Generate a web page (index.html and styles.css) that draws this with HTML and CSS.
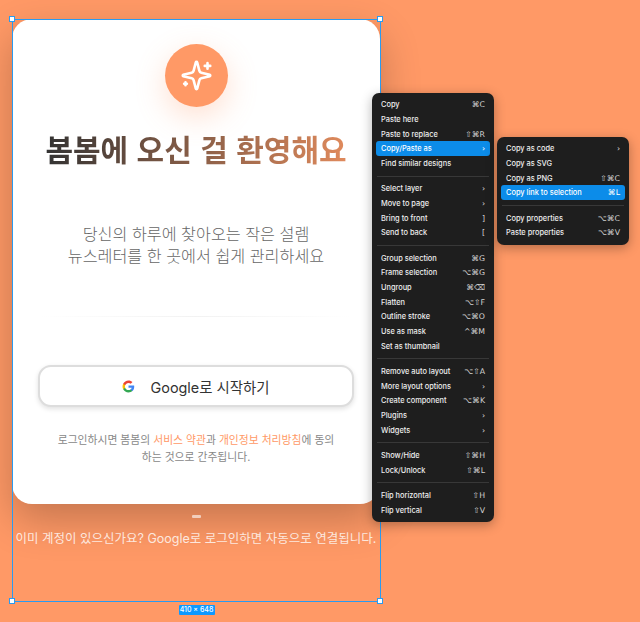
FILE: index.html
```html
<!DOCTYPE html>
<html lang="ko">
<head>
<meta charset="utf-8">
<title>봄봄</title>
<link rel="stylesheet" href="styles.css">
</head>
<body>
<div class="frame">
  <main class="card">
    <div class="badge">
      <svg class="sparkle" viewBox="0 0 24 24" fill="none" stroke="#fff" stroke-width="1.9" stroke-linecap="round" stroke-linejoin="round">
        <path d="M9.937 15.5A2 2 0 0 0 8.5 14.063l-6.135-1.582a.5.5 0 0 1 0-.962L8.5 9.936A2 2 0 0 0 9.937 8.5l1.582-6.135a.5.5 0 0 1 .963 0L14.063 8.5A2 2 0 0 0 15.5 9.937l6.135 1.581a.5.5 0 0 1 0 .964L15.5 14.063a2 2 0 0 0-1.437 1.437l-1.582 6.135a.5.5 0 0 1-.963 0z"/>
        <path d="M20 3v4M22 5h-4M4 17v2M5 18H3"/>
      </svg>
    </div>
    <h1 class="title">봄봄에 오신 걸 환영해요</h1>
    <p class="lead">당신의 하루에 찾아오는 작은 설렘<br>뉴스레터를 한 곳에서 쉽게 관리하세요</p>
    <div class="rule"></div>
    <button class="google" type="button">
      <svg class="g-icon" viewBox="0 0 24 24">
        <path fill="#4285F4" d="M22.56 12.25c0-.78-.07-1.53-.2-2.25H12v4.26h5.92c-.26 1.37-1.04 2.53-2.21 3.31v2.77h3.57c2.08-1.92 3.28-4.74 3.28-8.09z"/>
        <path fill="#34A853" d="M12 23c2.97 0 5.46-.98 7.28-2.66l-3.57-2.77c-.98.66-2.23 1.06-3.71 1.06-2.86 0-5.29-1.93-6.16-4.53H2.18v2.84C3.99 20.53 7.7 23 12 23z"/>
        <path fill="#FBBC05" d="M5.84 14.09c-.22-.66-.35-1.36-.35-2.09s.13-1.43.35-2.09V7.07H2.18C1.43 8.55 1 10.22 1 12s.43 3.45 1.18 4.93l3.66-2.84z"/>
        <path fill="#EA4335" d="M12 5.38c1.62 0 3.06.56 4.21 1.64l3.15-3.15C17.45 2.09 14.97 1 12 1 7.7 1 3.99 3.47 2.18 7.07l3.66 2.84c.87-2.6 3.3-4.53 6.16-4.53z"/>
      </svg>
      <span>Google로 시작하기</span>
    </button>
    <p class="terms">로그인하시면 봄봄의 <a class="link">서비스 약관</a>과 <a class="link">개인정보 처리방침</a>에 동의<br>하는 것으로 간주됩니다.</p>
  </main>
  <div class="pill"></div>
  <p class="note">이미 계정이 있으신가요? Google로 로그인하면 자동으로 연결됩니다.</p>

  <div class="outline">
    <i class="handle tl"></i><i class="handle tr"></i><i class="handle bl"></i><i class="handle br"></i>
    <span class="size">410 × 648</span>
  </div>

  <nav class="menu main-menu">
    <div class="row"><span>Copy</span><kbd>⌘C</kbd></div>
    <div class="row"><span>Paste here</span></div>
    <div class="row"><span>Paste to replace</span><kbd>⇧⌘R</kbd></div>
    <div class="row active"><span>Copy/Paste as</span><kbd>›</kbd></div>
    <div class="row"><span>Find similar designs</span></div>
    <hr class="sep">
    <div class="row"><span>Select layer</span><kbd>›</kbd></div>
    <div class="row"><span>Move to page</span><kbd>›</kbd></div>
    <div class="row"><span>Bring to front</span><kbd>]</kbd></div>
    <div class="row"><span>Send to back</span><kbd>[</kbd></div>
    <hr class="sep">
    <div class="row"><span>Group selection</span><kbd>⌘G</kbd></div>
    <div class="row"><span>Frame selection</span><kbd>⌥⌘G</kbd></div>
    <div class="row"><span>Ungroup</span><kbd>⌘⌫</kbd></div>
    <div class="row"><span>Flatten</span><kbd>⌥⇧F</kbd></div>
    <div class="row"><span>Outline stroke</span><kbd>⌥⌘O</kbd></div>
    <div class="row"><span>Use as mask</span><kbd>^⌘M</kbd></div>
    <div class="row"><span>Set as thumbnail</span></div>
    <hr class="sep">
    <div class="row"><span>Remove auto layout</span><kbd>⌥⇧A</kbd></div>
    <div class="row"><span>More layout options</span><kbd>›</kbd></div>
    <div class="row"><span>Create component</span><kbd>⌥⌘K</kbd></div>
    <div class="row"><span>Plugins</span><kbd>›</kbd></div>
    <div class="row"><span>Widgets</span><kbd>›</kbd></div>
    <hr class="sep">
    <div class="row"><span>Show/Hide</span><kbd>⇧⌘H</kbd></div>
    <div class="row"><span>Lock/Unlock</span><kbd>⇧⌘L</kbd></div>
    <hr class="sep">
    <div class="row"><span>Flip horizontal</span><kbd>⇧H</kbd></div>
    <div class="row"><span>Flip vertical</span><kbd>⇧V</kbd></div>
  </nav>

  <nav class="menu sub-menu">
    <div class="row"><span>Copy as code</span><kbd>›</kbd></div>
    <div class="row"><span>Copy as SVG</span></div>
    <div class="row"><span>Copy as PNG</span><kbd>⇧⌘C</kbd></div>
    <div class="row active"><span>Copy link to selection</span><kbd>⌘L</kbd></div>
    <hr class="sep">
    <div class="row"><span>Copy properties</span><kbd>⌥⌘C</kbd></div>
    <div class="row"><span>Paste properties</span><kbd>⌥⌘V</kbd></div>
  </nav>
</div>
</body>
</html>
```
FILE: styles.css
```css
* { box-sizing: border-box; }
html, body { margin: 0; height: 100%; }
body {
  background: #ff9966;
  overflow: hidden;
  padding: 19px 0 0 12px;
  font-family: Inter, "Noto Sans CJK KR", sans-serif;
}
.frame {
  position: relative;
  width: 368px;
  height: 582px;
}
.card {
  height: 485px;
  background: #fff;
  border-radius: 20px;
  box-shadow: 0 16px 40px rgba(0, 0, 0, .23);
  display: flex;
  flex-direction: column;
  align-items: center;
  padding-top: 25px;
}
.badge {
  width: 63px;
  height: 63px;
  flex: none;
  border-radius: 50%;
  background: #ff9966;
  box-shadow: 0 10px 30px rgba(255, 153, 102, .3);
  display: flex;
  align-items: center;
  justify-content: center;
}
.sparkle { width: 33px; height: 33px; }
.title {
  margin: 19px 0 0;
  font-family: "Noto Sans CJK KR", sans-serif;
  font-size: 30px;
  line-height: 44px;
  font-weight: 700;
  white-space: nowrap;
  background: linear-gradient(90deg, #333 0%, #e08a5c 100%);
  -webkit-background-clip: text;
  background-clip: text;
  color: transparent;
}
.lead {
  margin: 52px 0 0;
  font-family: "Noto Sans CJK KR", sans-serif;
  font-size: 16.2px;
  line-height: 22px;
  font-weight: 300;
  text-align: center;
  color: #666;
}
.rule {
  width: 310px;
  height: 1px;
  margin-top: 50px;
  background: linear-gradient(90deg, transparent, #f2f2f2 50%, transparent);
}
.google {
  width: 316px;
  height: 42px;
  flex: none;
  margin-top: 48px;
  padding: 0 1px 0 0;
  background: #fff;
  border: 2px solid #ddd;
  border-radius: 13px;
  box-shadow: 0 2px 5px rgba(0, 0, 0, .12);
  display: flex;
  align-items: center;
  justify-content: center;
  gap: 16px;
  font-family: Inter, "Noto Sans CJK KR", sans-serif;
  font-size: 14.4px;
  color: #333;
}
.g-icon { width: 13px; height: 13px; }
.terms {
  margin: 25px 0 0;
  font-size: 10.8px;
  line-height: 17px;
  text-align: center;
  color: #888;
  white-space: nowrap;
}
.link { color: #ff9966; }
.pill {
  width: 9px;
  height: 3px;
  margin: 11px 0 0 180px;
  background: rgba(255, 255, 255, .6);
  border-radius: 1px;
}
.note {
  margin: 12px 0 0;
  text-align: center;
  white-space: nowrap;
  font-size: 12.5px;
  line-height: 18px;
  color: rgba(255, 255, 255, .8);
}
.outline {
  position: absolute;
  inset: -.5px;
  border: 1.5px solid #2a9bf0;
  pointer-events: none;
}
.handle {
  position: absolute;
  width: 6px;
  height: 6px;
  background: #fff;
  border: 1px solid #2a9bf0;
}
.tl { left: -3.5px; top: -3.5px; }
.tr { right: -3.5px; top: -3.5px; }
.bl { left: -3.5px; bottom: -3.5px; }
.br { right: -3.5px; bottom: -3.5px; }
.size {
  position: absolute;
  left: 166px;
  top: 585.5px;
  width: 36px;
  height: 10px;
  background: #0d99ff;
  border-radius: 1px;
  color: #fff;
  font-size: 7px;
  line-height: 10px;
  font-weight: 500;
  text-align: center;
}
.menu {
  position: absolute;
  background: #1e1e1e;
  border-radius: 7px;
  padding: 4.5px 4px 4px;
  box-shadow: 0 3px 12px rgba(0, 0, 0, .3);
  color: #eee;
  font-size: 7.4px;
  font-weight: 500;
}
.main-menu { left: 360px; top: 74px; width: 122px; height: 429px; }
.sub-menu { left: 485px; top: 118px; width: 132px; height: 108px; }
.row {
  height: 14.67px;
  padding: 0 5px;
  border-radius: 3px;
  display: flex;
  align-items: center;
  justify-content: space-between;
  white-space: nowrap;
}
.row.active { background: #0c8ce9; color: #fff; }
.row kbd {
  font-family: "DejaVu Sans", sans-serif;
  font-size: 7.8px;
  color: #d2d2d2;
}
.row.active kbd { color: #fff; }
.sep {
  height: 1px;
  margin: 5px 1px 4.7px;
  border: 0;
  background: #383838;
}
```
